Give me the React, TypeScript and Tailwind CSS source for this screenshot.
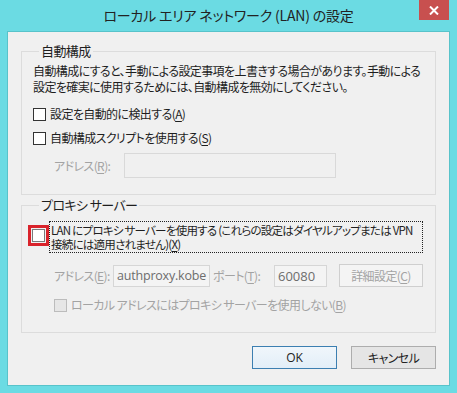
import React from 'react';

const jp = "font-['Noto_Sans_CJK_JP','Noto_Sans',sans-serif] [font-feature-settings:'palt']";

const Check = ({ disabled = false }: { disabled?: boolean }) => (
  <span
    className={`block w-[13px] h-[13px] shrink-0 border ${
      disabled ? 'border-[#bcbcbc] bg-[#e6e6e6]' : 'border-[#333333] bg-white'
    }`}
  />
);

const Key = ({ k }: { k: string }) => (
  <>
    (<span className="underline underline-offset-2">{k}</span>)
  </>
);

const App = () => {
  return (
    <div className={`w-[457px] h-[393px] bg-[#6bdbe3] flex flex-col ${jp} text-[12px] tracking-[-0.6px] whitespace-nowrap text-[#1e1e1e]`}>
      {/* title bar */}
      <div className="h-[31px] flex items-start relative">
        <div className="flex-1 text-center text-[14px] leading-[31px] tracking-[-0.2px] text-[#222]">
          ローカル エリア ネットワーク (LAN) の設定
        </div>
        <div className="absolute top-0 right-[8px] w-[30px] h-[20px] bg-[#c8504f] flex items-center justify-center">
          <svg width="10" height="9" viewBox="0 0 10 9">
            <path d="M1 0.5 L9 8.5 M9 0.5 L1 8.5" stroke="white" strokeWidth="2" />
          </svg>
        </div>
      </div>

      {/* client area */}
      <div className="mx-[7px] h-[355px] border border-[#58c3ca] bg-[#f0f0f0] px-[13px] pt-[12px] flex flex-col">
        {/* group 1 */}
        <fieldset className="border border-[#dcdcdc] h-[151px] px-[11px]">
          <legend className="ml-[6px] px-[2px] leading-[14px] text-[13px]">自動構成</legend>
          <div className="mt-[5px] leading-[16px]">
            自動構成にすると、手動による設定事項を上書きする場合があります。手動による
            <br />
            設定を確実に使用するためには、自動構成を無効にしてください。
          </div>
          <div className="mt-[11px] flex items-center gap-[4px] h-[16px]">
            <Check />
            <span>
              設定を自動的に検出する<Key k="A" />
            </span>
          </div>
          <div className="mt-[8px] flex items-center gap-[4px] h-[16px]">
            <Check />
            <span>
              自動構成スクリプトを使用する<Key k="S" />
            </span>
          </div>
          <div className="mt-[7px] flex items-center">
            <span className="w-[91px] pl-[21px] text-[#a3a3a3]">
              アドレス<Key k="R" />:
            </span>
            <span className="block w-[212px] h-[25px] border border-[#d9d9d9] bg-[#f0f0f0]" />
          </div>
        </fieldset>

        {/* group 2 */}
        <fieldset className="mt-[3px] border border-[#dcdcdc] h-[135px] px-[6px]">
          <legend className="ml-[11px] px-[2px] leading-[14px] text-[13px]">プロキシ サーバー</legend>
          <div className="mt-[9px] flex items-start">
            <span className="w-[21px] h-[21px] mt-[4px] border-[3px] border-[#d9232b] flex items-center justify-center shrink-0">
              <span className="block w-[13px] h-[13px] border border-[#7a7a7a] bg-white" />
            </span>
            <div className="w-[374px] border border-dotted border-[#222] text-[11.5px] leading-[14px] py-[1px] pl-[1px] tracking-[-0.75px]">
              LAN にプロキシ サーバーを使用する (これらの設定はダイヤルアップまたは VPN
              <br />
              接続には適用されません)<Key k="X" />
            </div>
          </div>
          <div className="mt-[11px] flex items-center text-[#a3a3a3]">
            <span className="w-[85px] pl-[26px]">
              アドレス<Key k="E" />:
            </span>
            <span className="block w-[97px] h-[22px] border border-[#d6d6d6] bg-[#f4f4f4] overflow-hidden font-['Open_Sans',sans-serif] tracking-[-0.2px] text-[12.5px] leading-[20px] pl-[3px] text-[#6d6d6d]">
              authproxy.kobe
            </span>
            <span className="ml-[3px] w-[61px]">
              ポート<Key k="T" />:
            </span>
            <span className="block w-[53px] h-[22px] border border-[#d6d6d6] bg-[#f4f4f4] font-['Open_Sans',sans-serif] tracking-normal text-[13px] leading-[20px] pl-[3px] text-[#6d6d6d]">
              60080
            </span>
            <span className="ml-[12px] w-[84px] h-[23px] border border-[#cfcfcf] bg-[#f4f4f4] flex items-center justify-center">
              詳細設定<Key k="C" />
            </span>
          </div>
          <div className="mt-[9px] pl-[26px] flex items-center gap-[4px] text-[#a3a3a3]">
            <Check disabled />
            <span>
              ローカル アドレスにはプロキシ サーバーを使用しない<Key k="B" />
            </span>
          </div>
        </fieldset>

        {/* buttons */}
        <div className="mt-[13px] flex justify-end gap-[14px]">
          <button className="w-[85px] h-[23px] border border-[#3c7fb1] bg-gradient-to-b from-[#f0f6fb] to-[#e2eef8] text-[#222] text-[12px] tracking-normal font-['Open_Sans',sans-serif]">
            OK
          </button>
          <button className="w-[85px] h-[23px] border border-[#adadad] bg-[#e5e5e5] text-[#222] text-[12px]">
            キャンセル
          </button>
        </div>
      </div>
    </div>
  );
};

export default App;
